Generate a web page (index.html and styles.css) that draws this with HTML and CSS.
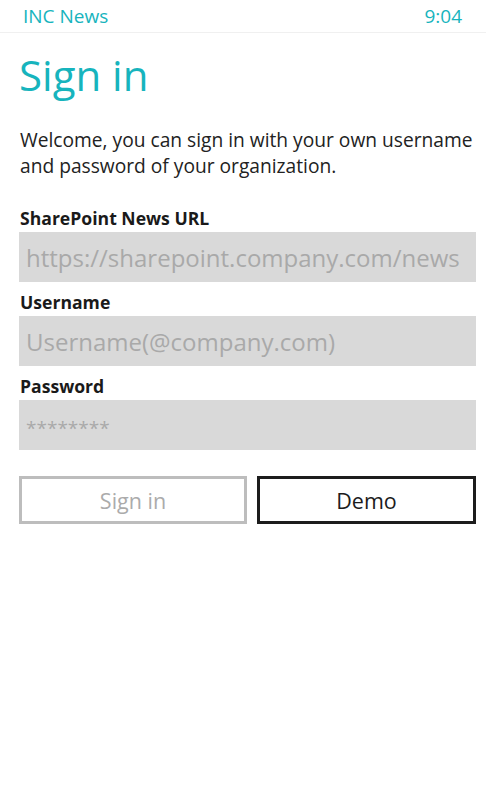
FILE: index.html
```html
<!DOCTYPE html>
<html lang="en">
<head>
  <meta charset="UTF-8">
  <meta name="viewport" content="width=device-width, initial-scale=1.0">
  <title>INC News - Sign in</title>
  <link rel="stylesheet" href="styles.css">
</head>
<body>

  <div class="status-bar">
    <span class="app-name">INC News</span>
    <span class="clock">9:04</span>
  </div>

  <div class="page">
    <h1 class="title">Sign in</h1>
    <p class="intro">Welcome, you can sign in with your own username and password of your organization.</p>

    <label class="field-label" for="url">SharePoint News URL</label>
    <input class="field" type="text" id="url" placeholder="https://sharepoint.company.com/news">

    <label class="field-label" for="username">Username</label>
    <input class="field" type="text" id="username" placeholder="Username(@company.com)">

    <label class="field-label" for="password">Password</label>
    <input class="field field-password" type="text" id="password" placeholder="********">

    <div class="buttons">
      <button class="btn btn-disabled">Sign in</button>
      <button class="btn btn-demo">Demo</button>
    </div>
  </div>

</body>
</html>
```

FILE: styles.css
```css
body {
  margin: 0;
  padding: 0;
  background: #fff;
  font-family: "Open Sans", "Noto Sans", sans-serif;
  color: #1f1f1f;
}
.status-bar {
  display: flex;
  justify-content: space-between;
  align-items: center;
  height: 32px;
  padding: 0 24px 0 23px;
  border-bottom: 1px solid #f0f0f0;
  color: #17b4bd;
  font-size: 19px;
}
.page {
  padding: 0 10px 0 19px;
}
.title {
  margin: 14px 0 0 0;
  font-size: 42px;
  font-weight: 400;
  color: #17b4bd;
  line-height: 56px;
}
.intro {
  margin: 24px 0 0 1px;
  font-size: 19.2px;
  line-height: 26px;
  color: #222;
}
.field-label {
  display: block;
  margin: 29px 0 0 1px;
  font-size: 17.6px;
  font-weight: 700;
  line-height: 20px;
  color: #1a1a1a;
}
.field {
  display: block;
  box-sizing: border-box;
  width: 100%;
  height: 50px;
  margin: 4px 0 0 0;
  padding: 0 7px;
  border: none;
  background: #d9d9d9;
  font-family: inherit;
  font-size: 24px;
  color: #333;
}
.field::placeholder {
  color: #a9a9a9;
}
.field-password::placeholder {
  font-size: 19px;
}
.field + .field-label {
  margin-top: 10px;
}
.buttons {
  display: flex;
  gap: 10px;
  margin-top: 26px;
}
.btn {
  flex: 1;
  height: 48px;
  background: #fff;
  font-family: inherit;
  font-size: 21.5px;
  padding: 0;
}
.btn-disabled {
  flex: 0 0 228px;
  border: 3px solid #bdbdbd;
  color: #ababab;
}
.btn-demo {
  border: 3px solid #1c1c1c;
  color: #1c1c1c;
}
```
